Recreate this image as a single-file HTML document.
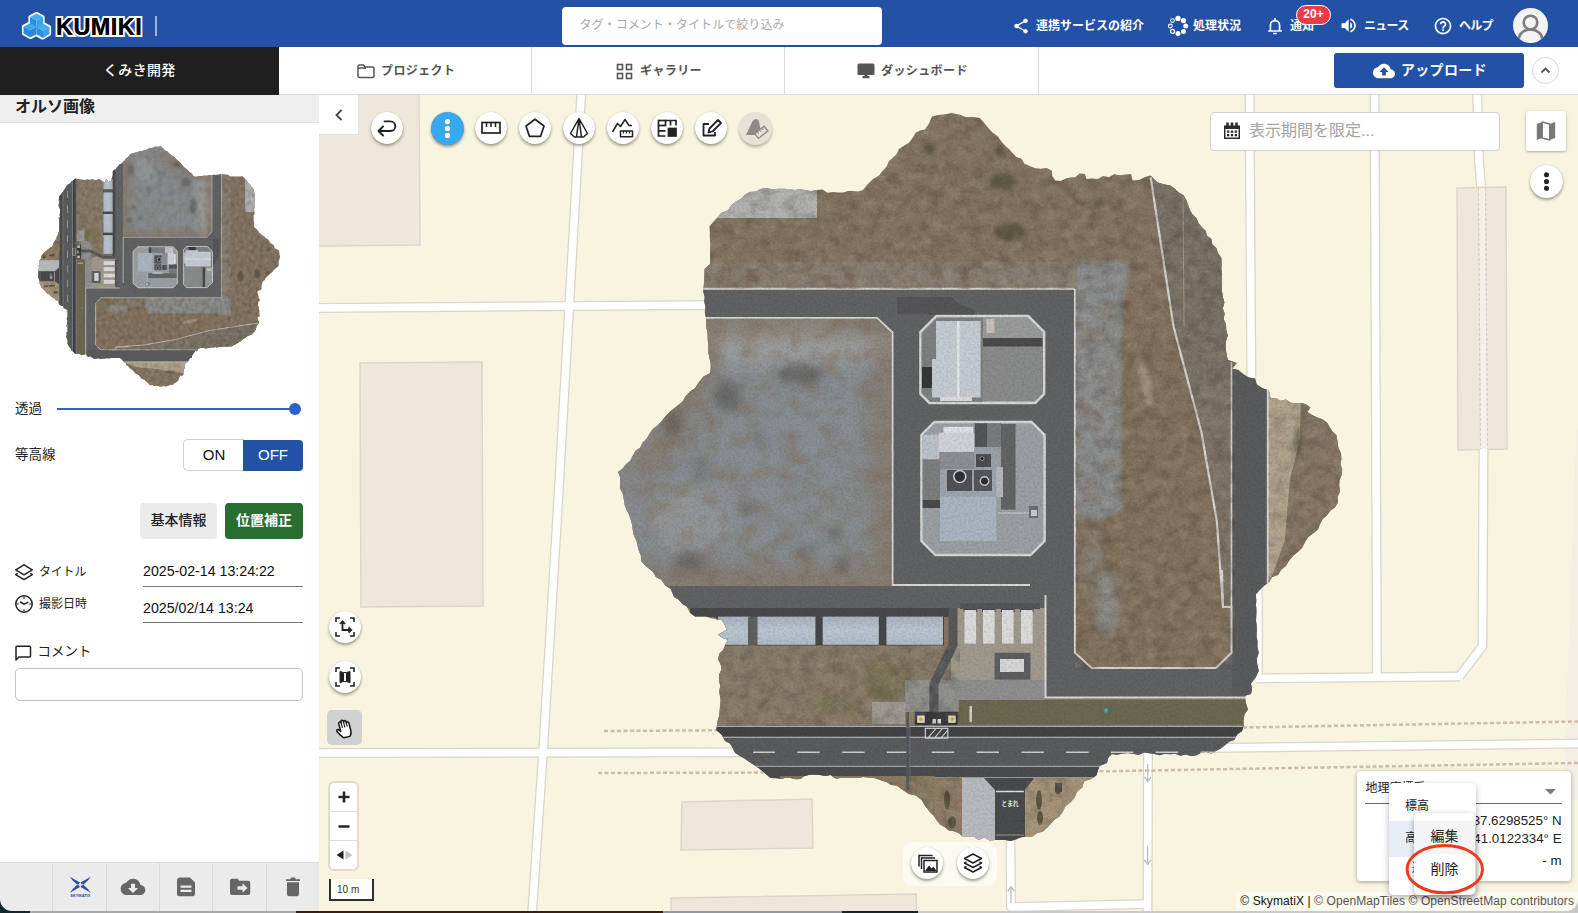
<!DOCTYPE html>
<html lang="ja">
<head>
<meta charset="utf-8">
<title>KUMIKI</title>
<style>
*{box-sizing:border-box;margin:0;padding:0}
html,body{width:1578px;height:913px;overflow:hidden;background:#fff}
body{position:relative;font-family:"Liberation Sans","Noto Sans CJK JP",sans-serif;color:#222;font-size:13px}
.abs{position:absolute}
#hdr{position:absolute;left:0;top:0;width:1578px;height:47px;background:#2351a5}
#hdr .t{position:absolute;top:17px;height:18px;line-height:18px;color:#fff;font-size:12px;font-weight:700;white-space:nowrap}
#hdr svg{position:absolute}
#search{position:absolute;left:562px;top:7px;width:320px;height:38px;background:#fff;border-radius:4px;color:#a9a9a9;font-size:12px;line-height:36px;padding-left:17.500px;white-space:nowrap;letter-spacing:.06px}
#badge{position:absolute;left:1296px;top:5px;width:35px;height:20px;border-radius:10px;background:#ee3a4b;border:1.5px solid #fff;color:#fff;font-size:12px;font-weight:700;line-height:17px;text-align:center}
#nav{position:absolute;left:0;top:47px;width:1578px;height:48px;background:#fff;border-bottom:1px solid #dcdcdc}
#proj{position:absolute;left:0;top:0;width:279px;height:47.5px;background:#1f1f1f;color:#fff;font-size:14px;font-weight:500;line-height:47px;text-align:center;letter-spacing:.3px}
.tab{position:absolute;top:0;height:47px;border-right:1px solid #dcdcdc;color:#555;font-size:12px;font-weight:700;line-height:47px;white-space:nowrap;letter-spacing:.4px}
.tab svg{position:absolute}
.tab span{position:absolute;top:1px}
#upload{position:absolute;left:1334px;top:6px;width:190px;height:35px;background:#2351a5;border-radius:3px;color:#fff;font-size:14px;font-weight:700;line-height:34px;white-space:nowrap;letter-spacing:.3px}
#chev{position:absolute;left:1532px;top:10px;width:27px;height:27px;border-radius:50%;border:1px solid #d5d5d5;background:#fff}
#left{position:absolute;left:0;top:95px;width:319px;height:818px;background:#fff}
#map{position:absolute;left:319px;top:95px;width:1259px;height:818px;background:#f8f4df;overflow:hidden}
</style>
</head>
<body>
<div id="hdr">
  <svg style="left:21px;top:10px" width="32" height="32" viewBox="0 0 32 32">
    <g stroke="#fff" stroke-width="3.2" stroke-linejoin="round" fill="#fff">
      <path d="M15.5 3.5 L22 7 L22 13.5 L28.5 17 L28.5 24 L21.5 28 L15 24.5 L9.5 27.5 L2.5 23.5 L2.5 16.5 L9 13 L9 7 Z"/>
    </g>
    <path d="M15.5 3.5 L22 7 L15.5 10.5 L9 7 Z" fill="#44aef0"/>
    <path d="M9 7 L15.5 10.5 L15.5 18 L9 14.5 Z" fill="#2b8fe0"/>
    <path d="M22 7 L15.5 10.5 L15.5 18 L22 14.5 Z" fill="#3aa0ea"/>
    <path d="M9 13.2 L15.5 16.8 L9 20.3 L2.5 16.6 Z" fill="#3fa8ee"/>
    <path d="M2.5 16.6 L9 20.3 L9 27.5 L2.5 23.6 Z" fill="#2a8ada"/>
    <path d="M15.5 16.8 L9 20.3 L9 27.5 L15.5 24.3 Z" fill="#2f86cf"/>
    <path d="M22 13.6 L28.5 17.1 L22 20.8 L15.5 17.2 Z" fill="#44aef0"/>
    <path d="M15.5 17.2 L22 20.8 L22 28 L15.5 24.3 Z" fill="#2b8fe0"/>
    <path d="M28.5 17.1 L22 20.8 L22 28 L28.5 24.1 Z" fill="#39a0ea"/>
  </svg>
  <div class="abs" style="left:56px;top:14px;height:26px;line-height:26px;font-size:23.5px;font-weight:700;color:#000;letter-spacing:.45px;-webkit-text-stroke:4px #fff;paint-order:stroke fill;white-space:nowrap">KUMIKI</div>
  <div class="abs" style="left:56px;top:14px;height:26px;line-height:26px;font-size:23.5px;font-weight:700;color:#000;letter-spacing:.45px;white-space:nowrap">KUMIKI</div>
  <div class="abs" style="left:155px;top:16px;width:1.5px;height:20px;background:#9fb3da"></div>
  <div id="search">タグ・コメント・タイトルで絞り込み</div>
  <!-- share -->
  <svg style="left:1012px;top:17px" width="18" height="18" viewBox="0 0 24 24" fill="#fff"><path d="M18 16.08c-.76 0-1.44.3-1.96.77L8.91 12.7c.05-.23.09-.46.09-.7s-.04-.47-.09-.7l7.05-4.11c.54.5 1.25.81 2.04.81 1.66 0 3-1.34 3-3s-1.340-3-3-3-3 1.340-3 3c0 .24.04.47.09.7L8.040 9.810C7.500 9.310 6.790 9 6 9c-1.660 0-3 1.340-3 3s1.340 3 3 3c.79 0 1.500-.31 2.040-.81l7.120 4.160c-.05.21-.08.43-.08.650 0 1.610 1.310 2.920 2.920 2.920s2.920-1.310 2.920-2.920-1.310-2.920-2.920-2.920z"/></svg>
  <div class="t" style="left:1036px">連携サービスの紹介</div>
  <!-- spinner -->
  <svg style="left:1167px;top:15px" width="22" height="22" viewBox="0 0 22 22" fill="#fff" stroke="#fff">
    <circle cx="11" cy="3.400" r="2.700" stroke="none"/><circle cx="16.500" cy="5.600" r="2.600" stroke="none"/><circle cx="18.700" cy="11" r="2.500" stroke="none"/><circle cx="16.500" cy="16.400" r="2.500" stroke="none"/><circle cx="11" cy="18.600" r="2.500" stroke="none"/>
    <circle cx="5.500" cy="16.400" r="2" fill="#2351a5" stroke-width="1.200"/><circle cx="3.300" cy="11" r="1.900" fill="#2351a5" stroke-width="1.100"/><circle cx="5.500" cy="5.600" r="1.900" fill="#2351a5" stroke-width="1.100"/>
  </svg>
  <div class="t" style="left:1193px">処理状況</div>
  <!-- bell -->
  <svg style="left:1265px;top:16px" width="20" height="20" viewBox="0 0 24 24" fill="none" stroke="#fff" stroke-width="2"><path d="M6.500 17.500 V11 a5.500 5.500 0 0 1 11 0 V17.500 M4.500 18 H19.500" stroke-linecap="round"/><path d="M10.500 21 h3" stroke-linecap="round"/><path d="M12 4.500 v-1.200" stroke-linecap="round"/></svg>
  <div class="t" style="left:1290px">通知</div>
  <div id="badge">20+</div>
  <!-- speaker -->
  <svg style="left:1338px;top:16px" width="19" height="19" viewBox="0 0 24 24" fill="#fff"><path d="M3 9v6h4l5 5V4L7 9H3zm13.500 3c0-1.770-1.020-3.290-2.500-4.030v8.050c1.480-.73 2.500-2.250 2.500-4.020zM14 3.230v2.060c2.890.86 5 3.540 5 6.710s-2.110 5.850-5 6.710v2.060c4.010-.91 7-4.490 7-8.770s-2.990-7.860-7-8.770z" transform="translate(1.500 0)"/></svg>
  <div class="t" style="left:1364px;letter-spacing:-.7px">ニュース</div>
  <!-- help -->
  <svg style="left:1432.500px;top:15.500px" width="20" height="20" viewBox="0 0 24 24" fill="#fff"><path d="M11 18h2v-2h-2v2zm1-16C6.480 2 2 6.480 2 12s4.480 10 10 10 10-4.480 10-10S17.520 2 12 2zm0 18c-4.410 0-8-3.590-8-8s3.590-8 8-8 8 3.590 8 8-3.590 8-8 8zm0-14c-2.210 0-4 1.790-4 4h2c0-1.100.9-2 2-2s2 .9 2 2c0 2-3 1.750-3 5h2c0-2.250 3-2.500 3-5 0-2.210-1.790-4-4-4z"/></svg>
  <div class="t" style="left:1459px;letter-spacing:-.7px">ヘルプ</div>
  <!-- avatar -->
  <svg style="left:1513px;top:8px" width="35" height="35" viewBox="0 0 35 35"><defs><clipPath id="avc"><circle cx="17.500" cy="17.500" r="17.500"/></clipPath></defs><circle cx="17.500" cy="17.500" r="17.500" fill="#f3f3f3"/><g clip-path="url(#avc)" fill="none" stroke="#7d7d7d" stroke-width="2.600"><circle cx="17.500" cy="14.500" r="6.800"/><path d="M5.500 36 v-4 a12 10.500 0 0 1 24 0 v4"/></g></svg>
</div>

<div id="nav">
  <div id="proj">くみき開発</div>
  <div class="tab" style="left:279px;width:253px">
    <svg style="left:78px;top:16px" width="18" height="16" viewBox="0 0 18 16" fill="none" stroke="#555" stroke-width="1.500"><path d="M1 3.500 a1.500 1.500 0 0 1 1.500-1.500 H6.500 l1.500 2 H15.500 a1.500 1.500 0 0 1 1.500 1.500 V13 a1.500 1.500 0 0 1-1.500 1.500 H2.500 a1.500 1.500 0 0 1-1.500-1.500 Z M1 5 H9"/></svg>
    <span style="left:102px">プロジェクト</span>
  </div>
  <div class="tab" style="left:532px;width:253px">
    <svg style="left:84px;top:15.500px" width="17" height="17" viewBox="0 0 17 17" fill="none" stroke="#555" stroke-width="1.600"><rect x="1.500" y="1.500" width="5" height="5"/><rect x="10.500" y="1.500" width="5" height="5"/><rect x="1.500" y="10.500" width="5" height="5"/><rect x="10.500" y="10.500" width="5" height="5"/></svg>
    <span style="left:108px">ギャラリー</span>
  </div>
  <div class="tab" style="left:785px;width:254px">
    <svg style="left:72px;top:16px" width="18" height="16" viewBox="0 0 18 16" fill="#555"><rect x="0.500" y="0.500" width="17" height="11.500" rx="1.500"/><rect x="5.500" y="13" width="7" height="2.200"/><rect x="7.500" y="11" width="3" height="3"/></svg>
    <span style="left:96px">ダッシュボード</span>
  </div>
  <div id="upload">
    <svg class="abs" style="left:39px;top:7px" width="22" height="22" viewBox="0 0 24 24" fill="#fff"><path d="M19.350 10.040C18.670 6.590 15.640 4 12 4 9.110 4 6.600 5.640 5.350 8.040 2.340 8.360 0 10.910 0 14c0 3.310 2.690 6 6 6h13c2.760 0 5-2.240 5-5 0-2.640-2.050-4.780-4.650-4.960zM14 13v4h-4v-4H7l5-5 5 5h-3z"/></svg>
    <span class="abs" style="left:67px;top:0">アップロード</span>
  </div>
  <div id="chev"><svg class="abs" style="left:6px;top:6px" width="13" height="13" viewBox="0 0 13 13" fill="none" stroke="#555" stroke-width="1.800"><path d="M2.500 8.500 L6.500 4.500 L10.500 8.500"/></svg></div>
</div>

<div id="left">
  <div class="abs" style="left:0;top:0;width:319px;height:28px;background:#efefef;border-bottom:1px solid #dedede"></div>
  <div class="abs" style="left:15px;top:0px;height:24px;line-height:24px;font-size:16px;font-weight:700;color:#222;white-space:nowrap">オルソ画像</div>
  <svg class="abs" id="thumb" style="left:0;top:28px" width="319" height="280" viewBox="0 0 319 280"><use href="#ortho" transform="translate(317.550 -182.400) scale(0.3323) rotate(90)"/></svg>
  <div class="abs" style="left:15px;top:304px;height:20px;line-height:20px;font-size:13.5px;color:#222">透過</div>
  <div class="abs" style="left:57px;top:313px;width:238px;height:2px;background:#2a62c9"></div>
  <div class="abs" style="left:289px;top:308px;width:12px;height:12px;border-radius:50%;background:#2a62c9"></div>
  <div class="abs" style="left:15px;top:350px;height:20px;line-height:20px;font-size:13.500px;color:#222">等高線</div>
  <div class="abs" style="left:183px;top:344px;width:61px;height:32px;border:1px solid #cfcfcf;border-right:none;border-radius:5px 0 0 5px;background:#fff;text-align:center;line-height:30px;font-size:15px;color:#111">ON</div>
  <div class="abs" style="left:243px;top:344.500px;width:60px;height:31px;border-radius:0 4px 4px 0;background:#2351a5;text-align:center;line-height:30px;font-size:15px;color:#fff">OFF</div>
  <div class="abs" style="left:140px;top:408px;width:77px;height:36px;border-radius:4px;background:#ebebeb;text-align:center;line-height:35px;font-size:14px;font-weight:500;color:#222">基本情報</div>
  <div class="abs" style="left:225px;top:408px;width:78px;height:36px;border-radius:4px;background:#2a6d31;text-align:center;line-height:35px;font-size:14px;font-weight:700;color:#fff">位置補正</div>
  <svg class="abs" style="left:14px;top:467.500px" width="20" height="20" viewBox="0 0 20 20" fill="none" stroke="#222" stroke-width="1.500" stroke-linejoin="round"><path d="M10 1.800 L18.300 6.800 L10 11.800 L1.700 6.800 Z"/><path d="M3.700 10.400 L1.700 11.700 L10 16.700 L18.300 11.700 L16.300 10.400"/></svg>
  <div class="abs" style="left:39px;top:467px;height:20px;line-height:20px;font-size:12px;color:#222;letter-spacing:-.2px">タイトル</div>
  <div class="abs" style="left:143px;top:466px;height:20px;line-height:20px;font-size:14.200px;color:#111;white-space:nowrap">2025-02-14 13:24:22</div>
  <div class="abs" style="left:143px;top:491px;width:160px;height:1px;background:#777"></div>
  <svg class="abs" style="left:14px;top:499px" width="20" height="20" viewBox="0 0 20 20" fill="none" stroke="#222" stroke-width="1.500" stroke-linecap="round"><circle cx="10" cy="10" r="8.200"/><path d="M6.500 8 L10 10.200 L13.800 8.300"/><path d="M10 3.200v1.200M10 15.600v1.200M3.200 10h1.200M15.600 10h1.200" stroke-width="1.200"/></svg>
  <div class="abs" style="left:39px;top:498.500px;height:20px;line-height:20px;font-size:12px;color:#222">撮影日時</div>
  <div class="abs" style="left:143px;top:503px;height:20px;line-height:20px;font-size:14.200px;color:#111;white-space:nowrap">2025/02/14 13:24</div>
  <div class="abs" style="left:143px;top:527px;width:160px;height:1px;background:#777"></div>
  <svg class="abs" style="left:14px;top:549px" width="18" height="18" viewBox="0 0 18 18" fill="none" stroke="#222" stroke-width="1.500" stroke-linejoin="round"><path d="M2 3.300 a1 1 0 0 1 1-1 H15.500 a1 1 0 0 1 1 1 V12 a1 1 0 0 1-1 1 H5 L2 16 Z"/></svg>
  <div class="abs" style="left:37.500px;top:547px;height:20px;line-height:20px;font-size:13.500px;color:#222">コメント</div>
  <div class="abs" style="left:15px;top:573px;width:288px;height:33px;border:1px solid #c4c4c4;border-radius:5px;background:#fff"></div>
  <!-- bottom toolbar -->
  <div class="abs" style="left:0;top:767px;width:319px;height:51px;background:#ebebeb;border-top:1px solid #dcdcdc"></div>
  <div class="abs" style="left:52px;top:768px;width:1px;height:50px;background:#dadada"></div>
  <div class="abs" style="left:106px;top:768px;width:1px;height:50px;background:#dadada"></div>
  <div class="abs" style="left:159px;top:768px;width:1px;height:50px;background:#dadada"></div>
  <div class="abs" style="left:212px;top:768px;width:1px;height:50px;background:#dadada"></div>
  <div class="abs" style="left:266px;top:768px;width:1px;height:50px;background:#dadada"></div>
  <svg class="abs" style="left:0;top:768px" width="319" height="50" viewBox="0 863 319 50">
  <g fill="#2a4fa3"><path d="M69.800 876.800 L80 882.600 L78 885.400 L72.500 880.300 Z M69.800 892.700 L80 886.900 L78 884.100 L72.500 889.200 Z M90.800 876.800 L80.600 882.600 L82.600 885.400 L88.100 880.300 Z M90.800 892.700 L80.600 886.900 L82.600 884.100 L88.100 889.200 Z"/></g>
  <text x="80.300" y="897.300" font-size="3.600" font-weight="700" fill="#2a4fa3" text-anchor="middle" textLength="20" lengthAdjust="spacingAndGlyphs" font-family="'Liberation Sans',sans-serif">SKYMATIX</text>
  <g fill="#666">
    <path transform="translate(120.700 874.600) scale(1.025)" d="M19.350 10.040C18.670 6.590 15.640 4 12 4 9.110 4 6.600 5.640 5.350 8.040 2.340 8.360 0 10.910 0 14c0 3.310 2.690 6 6 6h13c2.760 0 5-2.240 5-5 0-2.640-2.050-4.780-4.650-4.960zM17 13l-5 5-5-5h3V9h4v4h3z"/>
    <path d="M180 877.600 H190 L195 882.600 V893.800 A2.500 2.500 0 0 1 192.500 896.300 H179.500 A2.500 2.500 0 0 1 177 893.800 V880.600 A3 3 0 0 1 180 877.600 Z M180.500 885.500 V887.800 H191.500 V885.500 Z M180.500 889.800 V892.100 H191.500 V889.800 Z" fill-rule="evenodd"/>
    <path d="M232 878.800 H237.500 L239.500 880.800 H248.200 A2 2 0 0 1 250.200 882.800 V893 A2 2 0 0 1 248.200 895 H232 A2 2 0 0 1 230 893 V880.800 A2 2 0 0 1 232 878.800 Z M237.500 886.300 V889.700 H242.500 V892.800 L247.500 888 L242.500 883.200 V886.300 Z" fill-rule="evenodd"/>
    <path d="M286 879.200 H290.300 L291 877.600 H295 L295.700 879.200 H300 V881 H286 Z M287 882.200 H299 V894.300 A2 2 0 0 1 297 896.300 H289 A2 2 0 0 1 287 894.300 Z"/>
  </g>
</svg>

</div>

<div id="map">
  <svg class="abs" style="left:0;top:0" width="1259" height="818" viewBox="319 95 1259 818">
    <defs><!--DEFS--><clipPath id="oc"><path d="M932 116.4 L938.5 115.1 L945.2 114.3 L951.7 113 L960 114.8 L966.3 117.2 L973.1 117 L979.7 118 L984.1 123 L988.3 128.1 L992.9 132.9 L997.7 136.3 L1001.1 141.1 L1004.9 145.5 L1009.3 149.3 L1012.6 153.3 L1016.3 156.9 L1021.5 158.7 L1024.2 163.4 L1029 165.7 L1034.5 167.9 L1040.4 168.8 L1046.6 168 L1052 170.7 L1052.2 176.1 L1055.3 180.5 L1060.6 180.9 L1065.3 178.8 L1070.2 177.6 L1075.3 177.2 L1079.6 173.6 L1084.9 174 L1086.5 178.9 L1092.1 178.4 L1097.8 179.1 L1103.1 176.1 L1108.8 177.3 L1114.1 174.3 L1119.9 175.3 L1125.4 174.4 L1131 174 L1132.6 180.5 L1138.9 179.9 L1144.6 177.3 L1150.6 175.6 L1157.2 182.2 L1163.7 184.3 L1170.4 185.5 L1174.8 188.8 L1178.8 192.4 L1183.5 195.3 L1186.2 199.8 L1188.1 204.9 L1190 209.9 L1192.6 214.5 L1196.6 218.3 L1198.5 223.1 L1201.7 227.1 L1205.6 230.7 L1207.2 235.7 L1211.3 239.1 L1212.4 244.4 L1216.4 247.9 L1218.1 253.2 L1221.3 257.8 L1221.7 263.4 L1221.3 269.1 L1222.1 274.7 L1221.6 280.3 L1222 286 L1222 291.6 L1222.9 297.2 L1224.4 302.6 L1222.7 308.3 L1224.6 313.6 L1223.6 319.2 L1226 324.5 L1226.2 330 L1227.7 335.2 L1226.1 340.6 L1225.7 345.9 L1226 351.1 L1226.9 356.4 L1228 360 L1236.7 363 L1232 369 L1238.2 370.1 L1243.3 374.2 L1248.7 377.4 L1255 378.4 L1256.7 384.5 L1262.5 388.3 L1269 390.6 L1270.5 398.3 L1275.8 397.9 L1280.5 400.7 L1285.9 399.4 L1290.6 402.8 L1295.8 403.2 L1301 403 L1306.1 404.3 L1310.4 407.5 L1307.3 412 L1312.2 414.9 L1317.2 417.5 L1322.7 419.2 L1327.2 422.8 L1329.7 427.3 L1332.4 431.6 L1336.4 435 L1337.5 441.3 L1338.3 447.6 L1341 453.5 L1341.4 458.9 L1340.4 464.3 L1342.2 469.6 L1341.6 475 L1339.4 480.3 L1339.2 485.9 L1340.1 491.6 L1337.5 496.9 L1338 502.6 L1335.1 507.3 L1330.5 510.6 L1327.2 515 L1322.8 518.9 L1319.9 523.9 L1317.9 529.5 L1313.4 533.3 L1308.3 536.9 L1305 541.9 L1302.4 547.6 L1298 551.7 L1293.2 555.7 L1289.2 560.5 L1285.9 565.9 L1281.2 570 L1278.1 575.1 L1272.1 577.3 L1269 582.4 L1264.3 585.5 L1259.9 589.8 L1255.8 594.5 L1256.3 599.7 L1256 604.9 L1256.4 610.1 L1256.3 615.3 L1256 620.6 L1256.7 625.8 L1256.8 631 L1256.5 636.2 L1257.6 641.4 L1257.3 646.6 L1258.8 652.6 L1256.7 658.9 L1257.4 665 L1258.8 671 L1255.6 677.6 L1251 683.4 L1252 688.7 L1251 694 L1245 695.7 L1245.8 702.8 L1248 709.5 L1244.5 714.2 L1243.5 720 L1243.7 725.6 L1242 731 L1237.1 734.6 L1234.3 740 L1229.1 741.7 L1225 745.2 L1220.7 748.5 L1216 751 L1211.3 753.4 L1205.7 751.8 L1200.7 752.9 L1196 755.5 L1190.8 756.1 L1185.7 754.5 L1180.4 755.7 L1175.3 753.7 L1170.1 754.3 L1165 753.7 L1159.7 755.2 L1154.6 754 L1149.2 753.3 L1143.9 752.6 L1138.5 754.9 L1133.2 753.8 L1127.8 752.9 L1122.4 753.6 L1117.1 754.7 L1111.7 754 L1108.2 757.9 L1107 763 L1099.4 766 L1096.3 775.4 L1090.6 779.3 L1084 781.5 L1082.3 787.4 L1077.3 791.4 L1074.9 796.9 L1070.9 802 L1065.6 806.1 L1062.6 812 L1059.5 816.6 L1054.7 819.5 L1051 823.5 L1047.3 827.5 L1042.8 831.6 L1036.9 833.3 L1032 836.7 L1026.4 836.5 L1020.9 837.3 L1015.8 839.4 L1010.5 841 L1005.4 840.1 L1000.2 840.1 L995 840 L989.5 840.6 L984.5 837.4 L978.8 839.9 L973.8 836.5 L968.4 836.6 L963 836.7 L958.9 833.3 L954.3 831.2 L949 830.6 L944.7 827.1 L940 824.4 L936.6 820.3 L933.9 815.7 L930 812 L925.4 806.3 L921.7 800 L916 795.6 L909 794 L901.5 789 L896.5 785.4 L891 785 L886.5 781.9 L881.4 780.4 L873.8 777.8 L868.4 777.2 L863 776.9 L857.6 777.6 L852.2 777.8 L846.8 777.7 L841.4 777.5 L836 779 L831 775 L825.4 775.8 L819.8 775 L814.1 774.6 L808.5 775 L803 776.5 L800.8 779 L795.8 779.3 L790.7 778.1 L785.6 777.8 L780.6 779 L775.6 778.3 L770.5 778 L763 771.5 L758.6 768.1 L754 765 L749.3 762 L744.8 758.8 L740 756 L735.3 753.2 L732.8 748.2 L729.9 743.6 L725 741 L721.7 734.8 L716.4 730 L717.6 721 L719.1 716.1 L719.6 711.1 L720 706 L720.6 701 L719.9 696 L719.2 691 L720.3 686 L719 681 L719 674.7 L721.6 669 L720.5 663.9 L718 659.4 L719.2 653.8 L723.3 649.7 L725.4 644.6 L728 639.7 L722.6 638 L718 634.7 L726.5 629.8 L724.6 624.6 L721.6 620 L716.3 619.3 L711 618.3 L705.8 616.6 L700.4 616.5 L695 616.6 L689.8 612.7 L687 606.8 L682.3 604 L678.7 599.8 L674 597 L670.7 588.7 L665.2 585.5 L661.5 580.1 L655.9 577 L653.1 572.1 L648.8 568.6 L644.6 565 L641 560.8 L640.9 555.5 L638.8 550.7 L637.5 545.8 L636.5 540.7 L634 536 L632.9 531 L632.2 525.5 L630.9 520.2 L629.1 515 L626.7 510.1 L624.7 505 L623.8 499.4 L623 493.9 L620.2 488.7 L620.2 483 L620.2 477.3 L618 472 L622.6 468.7 L626 464.3 L630.2 460.7 L632.9 455.6 L635.6 450.8 L640.3 447.6 L642.6 442.5 L646.6 438.8 L649.3 434 L652.7 428.9 L657.7 425.2 L661.9 420.8 L665.7 416 L669.6 412.1 L674 408.6 L678.3 405 L682.6 401.4 L685.5 396.4 L689.8 391.7 L695.2 388.1 L698.6 382.6 L703.3 376.7 L710 373 L710.8 367.9 L710.7 362.9 L709.5 358 L708.5 353 L708.2 347.9 L708 342.7 L707.7 337.5 L707.6 332.4 L706.1 327.3 L706.2 322.1 L705.8 317 L704.8 312 L705.5 307 L704.3 302 L704.7 297 L703.3 292 L703.5 287 L704.2 281 L704.3 275 L704.5 269 L710 264 L710.1 258.6 L710 253.3 L710.1 247.9 L710.2 242.6 L709.8 237.2 L709.9 231.9 L709.4 226.5 L713 222.2 L716.7 218 L721 212.9 L727.6 210.5 L731.5 205 L735.8 201.6 L740.6 198.9 L744.6 195 L749.7 191.9 L755.8 191.5 L761 188.7 L766.8 188.2 L772.5 189.3 L778.2 188.8 L784 188.7 L789.5 189.3 L795 190 L800.5 189 L806 190.5 L811.4 191.1 L817 190 L822.5 189.4 L827.5 192.7 L833 192 L838 192.4 L843.1 192.5 L848 190.9 L853 191.1 L858.1 191.6 L863 190 L867.7 184.2 L873 179 L879 175.6 L882.5 170.9 L886.7 166.6 L889 161 L893.1 157.6 L896.8 153.9 L899 149 L903.9 145.8 L909 142.7 L912.7 138.1 L915.5 133 L919.9 130.4 L925 129.6 L929.1 123.3 Z" /></clipPath>
<filter id="nzd" x="0" y="0" width="100%" height="100%" color-interpolation-filters="sRGB"><feTurbulence type="fractalNoise" baseFrequency="0.07 0.08" numOctaves="4" seed="7"/><feColorMatrix type="matrix" values="0 0 0 0 0.23  0 0 0 0 0.19  0 0 0 0 0.16  1.7 0 0 0 -0.72"/></filter>
<filter id="nzl" x="0" y="0" width="100%" height="100%" color-interpolation-filters="sRGB"><feTurbulence type="fractalNoise" baseFrequency="0.09 0.1" numOctaves="3" seed="23"/><feColorMatrix type="matrix" values="0 0 0 0 0.72  0 0 0 0 0.68  0 0 0 0 0.62  0 1.6 0 0 -0.7"/></filter>
<filter id="nzb" x="0" y="0" width="100%" height="100%" color-interpolation-filters="sRGB"><feTurbulence type="fractalNoise" baseFrequency="0.05 0.06" numOctaves="4" seed="41"/><feColorMatrix type="matrix" values="0 0 0 0 0.50  0 0 0 0 0.40  0 0 0 0 0.31  0 0 1.8 0 -0.78"/></filter>
<filter id="nzf" x="0" y="0" width="100%" height="100%" color-interpolation-filters="sRGB"><feTurbulence type="fractalNoise" baseFrequency="0.45" numOctaves="2" seed="5"/><feColorMatrix type="matrix" values="0 0 0 0 0  0 0 0 0 0  0 0 0 0 0  0.9 0 0 0 -0.32"/></filter>
<linearGradient id="roofg" x1="0" y1="0" x2="0" y2="1"><stop offset="0" stop-color="#a9b4c0"/><stop offset="0.500" stop-color="#bcc6d1"/><stop offset="1" stop-color="#b0bbc7"/></linearGradient>
<filter id="bl9" x="-20%" y="-20%" width="140%" height="140%"><feGaussianBlur stdDeviation="9"/></filter><filter id="bl5" x="-50%" y="-50%" width="200%" height="200%"><feGaussianBlur stdDeviation="4"/></filter><filter id="bl3" x="-50%" y="-50%" width="200%" height="200%"><feGaussianBlur stdDeviation="2"/></filter>
<clipPath id="gravc"><path d="M600 318.500 H877 L891.500 333 V585.500 H600 Z M1075 300 H1128 V650 H1075 Z M1070 262 H700 V289 H1075 V300 H1120 L1135 262 Z"/></clipPath>
<clipPath id="grassc"><path d="M690 100 H1240 V289 H690 Z M1075 289 H1235 V670 H1075 Z M1268 385 H1350 V600 H1268 Z M700 645 H960 V726 H700 Z M1026 778 H1110 V850 H1026 Z M780 776 H961 V850 H780 Z"/></clipPath>
<clipPath id="c1c"><path d="M937.6 317.2 L1027 317.2 L1043 333.2 L1043 392.8 L1034 401.8 L930.6 401.8 L921.6 392.8 L921.6 333.2 Z" /></clipPath>
<clipPath id="c2c"><path d="M935.6 423.2 L1030.4 423.2 L1043.4 436.2 L1043.4 539.8 L1029.4 553.8 L936.6 553.8 L922.6 539.8 L922.6 436.2 Z" /></clipPath><!--/DEFS--></defs>
    <!-- landuse/buildings -->
    <g fill="#efe7dc" stroke="#dfd6cb" stroke-width="1.500">
      <path d="M315 90 H419 L420 245 L315 246 Z"/>
      <path d="M360 363 L482 362 L483 606 L361 607 Z"/>
      <path d="M682 802 L812 799 L813 848 L681 850 Z"/>
      <path d="M671 898 L916 894 L917 920 L671 920 Z"/>
      <path d="M1457 188 L1506 187 L1507 449 L1458 450 Z"/>
      <path d="M1576.500 430 L1590 430 L1590 800 L1563 800 Z" stroke="none" fill="#f4eee5"/>
    </g>
    <!-- road casings -->
    <g fill="none" stroke="#d9d5c9" stroke-width="10" stroke-linejoin="round">
      <path d="M581.500 90 L558.500 495 L543 753 L532 915"/>
      <path d="M315 308 L720 305"/>
      <path d="M315 753 L900 752 L1578 743.500"/>
      <path d="M1249.500 90 L1251.500 400 L1258 600 L1258 678"/>
      <path d="M1374.500 90 L1377 677"/>
      <path d="M1477 90 L1479 160 L1481 186"/>
      <path d="M1483.500 449 L1482.500 646 L1459.500 676.500"/>
      <path d="M1256 678.500 L1460 676.500"/>
      <path d="M1148 750 L1147.500 915"/>
      <path d="M1010.500 835 L1011 907 L1148 904"/>
    </g>
    <g fill="none" stroke="#fff" stroke-width="7.500" stroke-linejoin="round">
      <path d="M581.500 90 L558.500 495 L543 753 L532 915"/>
      <path d="M315 308 L720 305"/>
      <path d="M315 753 L900 752 L1578 743.500"/>
      <path d="M1249.500 90 L1251.500 400 L1258 600 L1258 678"/>
      <path d="M1374.500 90 L1377 677"/>
      <path d="M1477 90 L1479 160 L1481 186"/>
      <path d="M1483.500 449 L1482.500 646 L1459.500 676.500"/>
      <path d="M1256 678.500 L1460 676.500"/>
      <path d="M1148 750 L1147.500 915"/>
      <path d="M1010.500 835 L1011 907 L1148 904"/>
    </g>
    <!-- tunnel -->
    <g fill="none" stroke="#d8d0c6" stroke-width="1" stroke-dasharray="3 2"><path d="M1478.500 188 L1480.500 449"/><path d="M1485.500 188 L1487.500 449"/></g>
    <path d="M1482 188 L1484 449" stroke="#f6f1e8" stroke-width="6" fill="none"/>
    <g fill="none" stroke="#d8d0c6" stroke-width="1" stroke-dasharray="3 2"><path d="M1478.500 188 L1480.500 449"/><path d="M1485.500 188 L1487.500 449"/></g>
    <!-- dashed rails -->
    <g fill="none" stroke="#cdbba8" stroke-width="2.500" stroke-dasharray="4 2.500">
      <path d="M604 731 L760 730"/>
      <path d="M598 773 L800 772.500"/>
      <path d="M1230 727.700 L1578 721.500"/>
      <path d="M1080 771.700 L1578 763"/>
    </g>
    <!-- oneway arrows -->
    <g fill="none" stroke="#bdbdbd" stroke-width="1.300">
      <path d="M1147.800 764 V781 M1144.500 777 L1147.800 781.500 L1151 777"/>
      <path d="M1147.600 846 V864 M1144.300 860 L1147.600 864.500 L1150.800 860"/>
      <path d="M1011 903 V887 M1007.800 891 L1011 886.500 L1014.200 891"/>
    </g>
    <!--ORTHO--><g id="ortho" clip-path="url(#oc)">
<rect x="600" y="100" width="760" height="750" fill="#857563"/>
<path d="M700 262 L1075 262 L1075 289 L700 289 Z" fill="#8b857b" opacity="0.7"/>
<rect x="1075" y="289" width="160" height="381" fill="#85745f"/>
<path d="M1075 262 L1130 262 L1122 320 L1122 510 L1100 520 L1075 520 Z" fill="#8f969a" opacity="0.85" filter="url(#bl3)"/>
<ellipse cx="1108" cy="605" rx="13" ry="34" fill="#8f969a" opacity="0.7" filter="url(#bl5)"/>
<ellipse cx="1092" cy="560" rx="12" ry="30" fill="#8f969a" opacity="0.45" filter="url(#bl5)"/>
<ellipse cx="1146" cy="385" rx="5" ry="22" fill="#b3a596" opacity="0.7" filter="url(#bl3)" transform="rotate(-12 1146 385)"/>
<path d="M1150.6 172 L1240 172 L1240 372 L1195 400 L1173.6 326.8 Z" fill="#7b7366"/>
<path d="M1195 400 L1232 372 L1232 607 L1223 607 L1216.8 521 L1201.4 432 Z" fill="#80766a"/>
<path d="M716.7 218 L817 218 L817 186 L761 186 L744.6 193 L731.5 203 L712 222 Z" fill="#b4b5b3"/>
<path d="M1267 385 L1301 400 L1300 440 L1290 480 L1285 540 L1267 590 Z" fill="#b3a78f"/>
<path d="M1301 400 L1350 410 L1350 540 L1285 590 L1285 540 L1290 480 L1300 440 Z" fill="#887766"/>
<path d="M600 318.5 L877 318.5 L891.5 333 L891.5 585.5 L600 585.5 Z" fill="#888e91"/>
<rect x="700" y="645" width="260" height="81" fill="#8a7c6a"/>
<ellipse cx="885" cy="680" rx="22" ry="22" fill="#74714d" opacity="0.6" filter="url(#bl5)"/>
<ellipse cx="835" cy="705" rx="30" ry="10" fill="#74714d" opacity="0.45" filter="url(#bl5)"/>
<path d="M905 680 L1045 680 L1045 700 L960 700 L960 712 L905 712 Z" fill="#929290"/>
<rect x="951" y="586" width="94" height="114" fill="#a09a8e"/>
<rect x="951" y="680" width="94" height="20" fill="#909090"/>
<rect x="891.5" y="289" width="182" height="297" fill="#626364"/>
<path d="M875 317 L893 317 L893 335 Z" fill="#626364"/>
<rect x="690" y="289" width="383.5" height="28.5" fill="#626364"/>
<rect x="1045" y="289" width="28.5" height="408" fill="#626364"/>
<rect x="891.5" y="317" width="28.5" height="269" fill="#626364"/>
<rect x="891.5" y="403" width="153.5" height="18.5" fill="#626364"/>
<rect x="891.5" y="555" width="153.5" height="29" fill="#626364"/>
<rect x="660" y="586" width="385" height="22" fill="#626364"/>
<rect x="690" y="608" width="261" height="9" fill="#48494b"/>
<rect x="716" y="616" width="228" height="29.5" fill="#47484a"/>
<path d="M1045 652 L1076.4 652.8 L1091.7 668 L1216 668 L1232 652 L1232 369 L1267.5 369 L1267.5 697 L1045 697 Z" fill="#626364"/>
<rect x="1232" y="369" width="35.5" height="328" fill="#4d4d4f" opacity="0.3"/>
<path d="M953 608 L953 645 L934 684 L934 712" fill="none" stroke="#59595a" stroke-width="9"/>
<rect x="958.5" y="700" width="291.5" height="24.5" fill="#6d6850"/>
<rect x="700" y="725" width="560" height="53" fill="#5b5c5e"/>
<rect x="700" y="725" width="560" height="11.5" fill="#424345"/>
<rect x="700" y="766.5" width="560" height="12" fill="#4b4c4e"/>
<path d="M700 726.2 L1260 726.2" fill="none" stroke="#b4b4b2" stroke-width="1.6"/>
<path d="M700 737.3 L1260 737.3" fill="none" stroke="#a9aaac" stroke-width="1.3"/>
<path d="M700 766.3 L1260 766.3" fill="none" stroke="#9fa0a2" stroke-width="1.3"/>
<path d="M780 777.8 L1110 777.8" fill="none" stroke="#9b9c9c" stroke-width="1.4"/>
<path d="M753 752.3 L1260 752.3" fill="none" stroke="#cfcfd0" stroke-width="1.6" stroke-dasharray="22.5 22.3" stroke-dashoffset="0.5"/>
<rect x="930" y="778" width="170" height="72" fill="#a8967a"/>
<rect x="900" y="778" width="62" height="72" fill="#917e68"/>
<rect x="780" y="776" width="155" height="74" fill="#8a7a62"/>
<rect x="962" y="778" width="33" height="72" fill="#b9bbbf"/>
<path d="M984 778 L1034 778 L1025 790 L1025 850 L995 850 L995 790 Z" fill="#4a4b4d"/>
<path d="M936.4 316 L1028.2 316 L1044.2 332 L1044.2 394 L1035.2 403 L929.4 403 L920.4 394 L920.4 332 Z" fill="#9aa0a3" stroke="#d8d8d4" stroke-width="2.4"/>
<path d="M934.4 422 L1031.6 422 L1044.6 435 L1044.6 541 L1030.6 555 L935.4 555 L921.4 541 L921.4 435 Z" fill="#9aa0a3" stroke="#d8d8d4" stroke-width="2.4"/>
<path d="M1075 289 L1075 652.8 L1091.7 668 L1216 668 L1231.5 652.8 L1231.5 607 L1223 607 L1222 570" fill="none" stroke="#d8d8d4" stroke-width="2"/>
<path d="M700 288.7 L1075 288.7" fill="none" stroke="#d8d8d4" stroke-width="2"/>
<path d="M700 318 L877 318 L892.5 332.5 L892.5 585 L1030 585" fill="none" stroke="#d8d8d4" stroke-width="2"/>
<path d="M1045.5 595 L1045.5 697.5 L1250 697.5" fill="none" stroke="#d8d8d4" stroke-width="2"/>
<path d="M1267.8 390 L1267.8 585" fill="none" stroke="#d8d8d4" stroke-width="2"/>
<path d="M1231.5 362 L1231.5 607" fill="none" stroke="#d8d8d4" stroke-width="1.6"/>
<path d="M1150.6 177 L1173.6 326.8 L1201.4 432 L1216.8 521 L1223 607" fill="none" stroke="#d8d8d6" stroke-width="2.2"/>
<path d="M1183 196 L1184 326" fill="none" stroke="#9a9a98" stroke-width="1"/>
<path d="M897 297 L952 297 L958 303 L975 310 L975 314.5 L897 314.5 Z" fill="#565658"/>
<g clip-path="url(#c1c)">
<path d="M921 330 L934 317.5 L983 317.5 L983 402 L929 402 L921 394 Z" fill="#7f8081"/>
<rect x="983" y="317" width="60" height="21" fill="#9a9b9b"/>
<rect x="983" y="338" width="59.5" height="8.6" fill="#4b4b4c"/>
<rect x="983" y="347" width="60" height="54" fill="#8a8b8b"/>
<rect x="922" y="367" width="10" height="21" fill="#37383a"/>
<path d="M936 321 L980.6 321 L980.6 397.5 L932 397.5 L932 359 L936 359 Z" fill="#c6ccd4"/>
<rect x="957" y="321" width="2.5" height="76.5" fill="#e3e7ec"/>
<rect x="940" y="397" width="32" height="4" fill="#d9dcdf"/>
<rect x="986.5" y="319" width="7.9" height="14" fill="#c9c0bb"/>
</g>
<g clip-path="url(#c2c)">
<rect x="1001" y="423.8" width="14.5" height="85.8" fill="#646566"/>
<rect x="974.7" y="423" width="12.8" height="24" fill="#545556"/>
<rect x="987.5" y="423" width="13.5" height="24" fill="#7b7c7d"/>
<rect x="922" y="459" width="18" height="41" fill="#7d7e7f"/>
<rect x="922" y="500" width="18" height="8" fill="#4a4b4c"/>
<rect x="943.5" y="426.8" width="29.8" height="6.2" fill="#dfe2e6"/>
<rect x="922.4" y="434.7" width="16.6" height="24.6" fill="#bcc3cb"/>
<rect x="938.8" y="432.7" width="35.5" height="19.3" fill="#d0d4da"/>
<rect x="940" y="452" width="34" height="17" fill="#8d8f92"/>
<rect x="940" y="469" width="56.4" height="27" fill="#9ea5ae"/>
<rect x="974" y="448.5" width="22.4" height="21.5" fill="#9aa1aa"/>
<rect x="976" y="454" width="15" height="13" fill="#4c4e52"/>
<rect x="947" y="470" width="25" height="21" fill="#4f5257"/>
<rect x="974" y="470" width="18" height="21" fill="#55585d"/>
<circle cx="959.8" cy="476.5" r="6" fill="#2e3034" stroke="#c9ced4" stroke-width="1.6"/>
<circle cx="984.5" cy="481" r="4.2" fill="#2e3034" stroke="#c9ced4" stroke-width="1.4"/>
<circle cx="982" cy="458.500" r="2" fill="#222" stroke="#aab" stroke-width="0.800"/>
<rect x="996.4" y="467" width="6.6" height="30" fill="#b4b9c0"/>
<rect x="940" y="496.4" width="56.4" height="44.6" fill="#a9b5c1"/>
<rect x="998" y="512" width="32" height="2" fill="#b5b8bb"/>
<rect x="1029" y="506" width="9" height="12" fill="#6d6e70"/>
<rect x="1031" y="510" width="6" height="6" fill="#c9cbcd"/>
</g>
<rect x="718" y="616.6" width="32" height="28.2" fill="url(#roofg)"/>
<rect x="757.4" y="616.6" width="58" height="28.2" fill="url(#roofg)"/>
<rect x="822.7" y="616.6" width="56.1" height="28.2" fill="url(#roofg)"/>
<rect x="886.4" y="616.6" width="56.6" height="28.2" fill="url(#roofg)"/>
<rect x="748" y="616.6" width="9" height="28.2" fill="#5e6062"/>
<rect x="963.5" y="608" width="13.6" height="4" fill="#4a4a4a"/>
<rect x="964.5" y="610" width="11.6" height="33.6" fill="#dcdcdb"/>
<rect x="982" y="608" width="13.6" height="4" fill="#4a4a4a"/>
<rect x="983" y="610" width="11.6" height="33.6" fill="#dcdcdb"/>
<rect x="1001" y="608" width="13.6" height="4" fill="#4a4a4a"/>
<rect x="1002" y="610" width="11.6" height="33.6" fill="#dcdcdb"/>
<rect x="1020" y="608" width="13.6" height="4" fill="#4a4a4a"/>
<rect x="1021" y="610" width="11.6" height="33.6" fill="#dcdcdb"/>
<rect x="960" y="603" width="80" height="6" fill="#55565a"/>
<rect x="994.6" y="652.8" width="35.8" height="26.9" fill="#5e5f61"/>
<rect x="1000" y="659" width="24" height="13" fill="#d6d7d8"/>
<rect x="914.8" y="711.7" width="43" height="13.3" fill="#38393b"/>
<rect x="917.2" y="715.5" width="7.5" height="7.3" fill="#e4e1d6"/>
<circle cx="920.95" cy="719.2" r="1.7" fill="#e9a91c"/>
<rect x="948.3" y="715.5" width="7.5" height="7.3" fill="#e4e1d6"/>
<circle cx="952.05" cy="719.2" r="1.7" fill="#e9a91c"/>
<rect x="932.5" y="719" width="3.5" height="4.5" fill="#ddd"/>
<rect x="937.5" y="719" width="3.5" height="4.5" fill="#ddd"/>
<g stroke="#dedede" stroke-width="1.100" fill="none"><rect x="925.300" y="728.300" width="22.500" height="9.800"/><path d="M928 738 L936 728.500 M934.500 738 L942.500 728.500 M941 738 L947.800 730"/></g>
<path d="M907.6 712 L907.6 790" fill="none" stroke="#55595e" stroke-width="2.6"/>
<path d="M905 727 L910 727 L910 790" fill="none" stroke="#6a6e73" stroke-width="1"/>
<rect x="872" y="702" width="33" height="22" fill="#a3a3a0" opacity="0.85"/>
<rect x="969.5" y="706" width="2.5" height="16" fill="#cfcfcc"/>
<rect x="1104.5" y="708.5" width="3" height="4" fill="#38b6e0"/>
<path d="M996 791.5 L1024 791.5" fill="none" stroke="#e2e2e2" stroke-width="1.6"/>
<text x="1010" y="806" font-family="'Liberation Sans','Noto Sans CJK JP',sans-serif" font-size="6.500" font-weight="700" fill="#e6e6e6" text-anchor="middle" textLength="17" lengthAdjust="spacingAndGlyphs">とまれ</text>
<path d="M996 835 L1024 835" fill="none" stroke="#9a9a9a" stroke-width="1.2"/>
<ellipse cx="1039" cy="800" rx="3" ry="10" fill="#4c4a33" opacity="0.8"/>
<ellipse cx="1040" cy="818" rx="3" ry="7" fill="#4c4a33" opacity="0.8"/>
<ellipse cx="947" cy="800" rx="3" ry="9" fill="#4c4a33" opacity="0.8"/>
<ellipse cx="952" cy="822" rx="4" ry="6" fill="#4c4a33" opacity="0.8"/>
<ellipse cx="1058" cy="790" rx="3" ry="4" fill="#4c4a33" opacity="0.8"/>
<rect x="1055" y="783" width="7" height="9" fill="#4b4d50"/>
<g clip-path="url(#gravc)"><ellipse cx="790" cy="345" rx="110" ry="22" fill="#a6a9aa" opacity="0.7" filter="url(#bl9)"/><ellipse cx="690" cy="520" rx="40" ry="35" fill="#a0a3a4" opacity="0.45" filter="url(#bl9)"/><path d="M600 322 H888 V582 H600 Z" fill="none" stroke="#86735f" stroke-width="34" opacity="0.5" filter="url(#bl9)"/><path d="M640 480 L700 380 L712 322" fill="none" stroke="#86735f" stroke-width="30" opacity="0.45" filter="url(#bl9)"/><rect x="600" y="255" width="540" height="405" filter="url(#nzb)" opacity="0.55"/><ellipse cx="800.6" cy="373.5" rx="24" ry="10" fill="#3d3431" opacity="0.385" filter="url(#bl5)"/><ellipse cx="727.5" cy="395.8" rx="13" ry="16" fill="#3d3431" opacity="0.3575" filter="url(#bl5)"/><ellipse cx="673.5" cy="424" rx="9" ry="12" fill="#3d3431" opacity="0.33" filter="url(#bl5)"/><ellipse cx="689.4" cy="561" rx="15" ry="9" fill="#3d3431" opacity="0.3575" filter="url(#bl5)"/><ellipse cx="835.5" cy="535.5" rx="8" ry="5" fill="#3d3431" opacity="0.3575" filter="url(#bl5)"/><ellipse cx="842" cy="564" rx="7" ry="9" fill="#3d3431" opacity="0.33" filter="url(#bl5)"/><ellipse cx="746.6" cy="507" rx="7" ry="7" fill="#3d3431" opacity="0.22" filter="url(#bl5)"/><ellipse cx="803.8" cy="551" rx="9" ry="7" fill="#3d3431" opacity="0.22" filter="url(#bl5)"/><ellipse cx="760" cy="440" rx="6" ry="8" fill="#3d3431" opacity="0.165" filter="url(#bl5)"/><ellipse cx="700" cy="470" rx="8" ry="14" fill="#3d3431" opacity="0.165" filter="url(#bl5)"/></g>
<g clip-path="url(#grassc)"><rect x="680" y="100" width="680" height="750" filter="url(#nzd)" opacity="0.38"/><rect x="680" y="100" width="680" height="750" filter="url(#nzl)" opacity="0.35"/><ellipse cx="1003" cy="182" rx="14" ry="8" fill="#4a4a32" opacity="0.55" filter="url(#bl3)"/><ellipse cx="1010" cy="232" rx="16" ry="9" fill="#4a4a32" opacity="0.55" filter="url(#bl3)"/><ellipse cx="930" cy="150" rx="6" ry="5" fill="#4a4a32" opacity="0.55" filter="url(#bl3)"/><ellipse cx="1000" cy="150" rx="5" ry="6" fill="#4a4a32" opacity="0.55" filter="url(#bl3)"/><ellipse cx="1098" cy="203" rx="5" ry="4" fill="#4a4a32" opacity="0.55" filter="url(#bl3)"/><ellipse cx="1298" cy="440" rx="4" ry="14" fill="#4a4a32" opacity="0.55" filter="url(#bl3)"/></g>
<rect x="600" y="100" width="760" height="750" filter="url(#nzf)" opacity="0.22"/>
</g><!--/ORTHO-->
  </svg>
  <!-- collapse -->
  <div class="abs" style="left:0;top:0;width:39.500px;height:39.500px;background:#fff;border-right:1px solid #e2e2e2;border-bottom:1px solid #e2e2e2"></div>
  <svg class="abs" style="left:13px;top:12px" width="14" height="16" viewBox="0 0 14 16" fill="none" stroke="#444" stroke-width="1.800"><path d="M9.500 3 L4.500 8 L9.500 13"/></svg>
  <style>
.cb{position:absolute;width:32px;height:32px;border-radius:50%;background:#fff;box-shadow:0 2px 3px rgba(60,50,30,.45),0 0 1px rgba(0,0,0,.2)}
.cb svg{position:absolute;left:0;top:0}
</style>
<!-- toolbar: coords relative to #map (page - 319, page - 95) -->
<div class="cb" style="left:52px;top:17px"><svg width="32" height="32" viewBox="0 0 32 32" fill="none" stroke="#222" stroke-width="1.900" stroke-linecap="round" stroke-linejoin="round"><path d="M12 14.500 L7.500 19 L12 23.500 M7.800 19 H19.500 A4.800 4.800 0 0 0 19.500 9.400 H13.500"/></svg></div>
<div class="cb" style="left:111.500px;top:16.500px;width:33px;height:33px;background:#38a9ee"><svg width="33" height="33" viewBox="0 0 33 33" fill="#fff"><circle cx="16.500" cy="9.600" r="2.600"/><circle cx="16.500" cy="16.500" r="2.600"/><circle cx="16.500" cy="23.400" r="2.600"/></svg></div>
<div class="cb" style="left:156px;top:17px"><svg width="32" height="32" viewBox="0 0 32 32" fill="none" stroke="#222" stroke-width="1.700"><rect x="7" y="10.500" width="18" height="10.500"/><path d="M11.500 10.500 v4.500 M16 10.500 v4.500 M20.500 10.500 v4.500" stroke-width="1.500"/></svg></div>
<div class="cb" style="left:200px;top:17px"><svg width="32" height="32" viewBox="0 0 32 32" fill="none" stroke="#222" stroke-width="1.700" stroke-linejoin="round"><path d="M16 7.300 L25 14 L21.600 24.300 H10.400 L7 14 Z"/></svg></div>
<div class="cb" style="left:244px;top:17px"><svg width="32" height="32" viewBox="0 0 32 32" fill="none" stroke="#222" stroke-width="1.500" stroke-linejoin="round"><path d="M16 6.500 L7.500 21.500 L11.500 25 H20.500 L24.500 21.500 Z M16 6.500 L13.500 25 M16 6.500 L18.500 25"/></svg></div>
<div class="cb" style="left:288px;top:17px"><svg width="32" height="32" viewBox="0 0 32 32" fill="none" stroke="#222" stroke-width="1.500" stroke-linejoin="round"><path d="M5.500 20 L10.500 11.500 L13.500 14.500 L18 7.500 L22 13.500 H25"/><rect x="13.500" y="19" width="12" height="5.800"/><path d="M16.500 19 v2.500 M19.500 19 v2.500 M22.500 19 v2.500" stroke-width="1.200"/></svg></div>
<div class="cb" style="left:332px;top:17px"><svg width="32" height="32" viewBox="0 0 32 32" fill="none" stroke="#222" stroke-width="1.700"><rect x="7.500" y="8.500" width="7" height="5"/><path d="M14.500 8.500 H25 V13.500 M19.500 8.500 V13.500 M7.500 13.500 V24 H14.500 M7.500 18.800 H14.500"/><rect x="17.500" y="16.500" width="7.500" height="7.500" fill="#222"/></svg></div>
<div class="cb" style="left:376px;top:17px"><svg width="32" height="32" viewBox="0 0 32 32" fill="none" stroke="#222" stroke-width="1.800" stroke-linejoin="round"><path d="M14 12 H8.500 V23.500 H20 V20"/><path d="M13.500 20.500 L14.500 16.500 L23 8 L26 11 L17.500 19.500 Z" /></svg></div>
<div class="cb" style="left:419.500px;top:16.500px;width:33px;height:33px;background:#e6e2d8;box-shadow:0 2px 3px rgba(60,50,30,.35)"><svg width="33" height="33" viewBox="0 0 33 33"><path d="M7 23 L13.200 9.800 Q16 5 19.800 8.500 L22.500 23 Z" fill="#8e8b86"/><g transform="rotate(-38 22.300 20.300)"><rect x="16.300" y="17.300" width="12" height="6" fill="#e6e2d8" stroke="#8e8b86" stroke-width="1.400"/><path d="M19.300 17.300v2.600M22.300 17.300v2.600M25.300 17.300v2.600" stroke="#8e8b86" stroke-width="1"/></g></svg></div>
<!-- date filter -->
<div class="abs" style="left:891px;top:16.500px;width:290px;height:39px;background:#fff;border:1px solid #d2d2d2;border-radius:4px"></div>
<svg class="abs" style="left:903px;top:26px" width="20" height="20" viewBox="0 0 20 20"><path d="M2 4.500 H18 V18 H2 Z" fill="#2b2b2b"/><rect x="3.500" y="8" width="13" height="8.500" fill="#fff"/><g fill="#2b2b2b"><rect x="4.200" y="1.500" width="2.600" height="4"/><rect x="8.700" y="1.500" width="2.600" height="4"/><rect x="13.200" y="1.500" width="2.600" height="4"/><rect x="5" y="9.500" width="2.300" height="2.300"/><rect x="8.850" y="9.500" width="2.300" height="2.300"/><rect x="12.700" y="9.500" width="2.300" height="2.300"/><rect x="5" y="13" width="2.300" height="2.300"/><rect x="8.850" y="13" width="2.300" height="2.300"/><rect x="12.700" y="13" width="2.300" height="2.300"/></g></svg>
<div class="abs" style="left:930px;top:24px;height:24px;line-height:24px;font-size:16px;color:#a4a4a4;white-space:nowrap">表示期間を限定...</div>
<!-- map style button -->
<div class="abs" style="left:1207px;top:16px;width:40px;height:40px;background:#fff;border-radius:3px;box-shadow:0 1px 3px rgba(0,0,0,.3)"><svg class="abs" style="left:9px;top:9px" width="22" height="22" viewBox="0 0 22 22"><path d="M1.800 4 L7.300 2 V18 L1.800 20 Z M14.700 4 L20.200 2 V18 L14.700 20 Z" fill="#777"/><path d="M7.300 2 L14.700 4 V20 L7.300 18 Z" fill="#fff" stroke="#777" stroke-width="1.300" stroke-linejoin="round"/></svg></div>
<div class="cb" style="left:1210.500px;top:70px;width:33px;height:33px"><svg width="33" height="33" viewBox="0 0 33 33" fill="#262626"><circle cx="16.500" cy="9.700" r="2.550"/><circle cx="16.500" cy="16.500" r="2.550"/><circle cx="16.500" cy="23.300" r="2.550"/></svg></div>
<!-- left buttons -->
<div class="cb" style="left:10px;top:516px"><svg width="32" height="32" viewBox="0 0 32 32" fill="none" stroke="#222" stroke-width="1.600"><path d="M7 11 V7 H11 M21 7 H25 V11 M25 21 V25 H21 M11 25 H7 V21"/><path d="M13.500 10.500 V19 H22 M11 13 L13.500 10.300 L16 13 M19.500 16.500 L22.200 19 L19.500 21.500" stroke-width="1.800"/></svg></div>
<div class="cb" style="left:10px;top:566px"><svg width="32" height="32" viewBox="0 0 32 32" fill="none" stroke="#222" stroke-width="1.600"><path d="M7 11 V7 H11 M21 7 H25 V11 M25 21 V25 H21 M11 25 H7 V21"/><path d="M11 10.500 L14.500 11.500 V20.500 L11 21.500 Z M21 10.500 L17.500 11.500 V20.500 L21 21.500 Z" fill="#222" stroke-width="1"/><path d="M14.500 11.500 H17.500 M14.500 20.500 H17.500" stroke-width="1.200"/></svg></div>
<div class="abs" style="left:8px;top:615px;width:35px;height:35px;border-radius:5px;background:#d1d1d1"><svg class="abs" style="left:6px;top:5.500px;transform:rotate(-14deg)" width="22" height="24" viewBox="0 0 22 24" fill="#fff" stroke="#111" stroke-width="1.500" stroke-linejoin="round"><path d="M7 13 V6.500 Q7 5 8.300 5 Q9.500 5 9.500 6.500 V5.500 Q9.500 4 10.800 4 Q12 4 12 5.500 V6.300 Q12 5 13.300 5 Q14.500 5 14.500 6.500 V8 Q14.500 7 15.700 7 Q17 7 17 8.500 V15 Q17 20 14.500 21.500 H8.500 Q6 19 3.500 14 Q2.800 12.300 4.300 12 Q5.500 12 7 14.500 Z"/><path d="M9.500 6.500 V11.500 M12 6.300 V11.500 M14.500 8 V11.500" fill="none" stroke-width="1.100"/></svg></div>
<!-- zoom -->
<div class="abs" style="left:8.500px;top:685.500px;width:31.500px;height:90px;border-radius:6px;background:#e3dcc6"></div>
<div class="abs" style="left:10.500px;top:687.500px;width:27.500px;height:86px;border-radius:4px;background:#fff"></div>
<div class="abs" style="left:10.500px;top:716px;width:27.500px;height:1px;background:#dcdcdc"></div>
<div class="abs" style="left:10.500px;top:745px;width:27.500px;height:1px;background:#dcdcdc"></div>
<svg class="abs" style="left:10.500px;top:687.500px" width="28" height="86" viewBox="0 0 28 86"><path d="M8.500 14 H19.500 M14 8.500 V19.500 M8.500 43.500 H19.500" stroke="#262626" stroke-width="2.600" fill="none"/><path d="M13.500 67.500 V76.500 L6.500 72 Z" fill="#222"/><path d="M15.500 67.500 V76.500 L22.500 72 Z" fill="#c4c4c4"/></svg>
<!-- scale -->
<div class="abs" style="left:10px;top:784px;width:45px;height:21.500px;border:2px solid #2e2e2e;border-top:none;background:rgba(255,255,255,.78);font-size:10px;color:#333;line-height:21px;padding-left:6px">10 m</div>
<!-- layer buttons -->
<div class="abs" style="left:583.500px;top:747px;width:94px;height:44px;border-radius:10px;background:rgba(255,255,255,.62)"></div>
<div class="cb" style="left:592px;top:752px"><svg width="32" height="32" viewBox="0 0 32 32" fill="none" stroke="#222" stroke-width="1.500"><path d="M8 19.500 V8.500 H21.500"/><path d="M10.500 22 V11 H24"/><rect x="13" y="13.500" width="13" height="11.500" fill="#fff"/><path d="M14 24 L18 18.500 L20.500 21.500 L22.500 19.500 L25.500 24 Z" fill="#222" stroke="none"/></svg></div>
<div class="cb" style="left:638px;top:752px"><svg width="32" height="32" viewBox="0 0 32 32" fill="none" stroke="#222" stroke-width="1.500" stroke-linejoin="round"><path d="M16 7 L24.500 11.500 L16 16 L7.500 11.500 Z"/><path d="M9.500 15 L7.500 16 L16 20.500 L24.500 16 L22.500 15"/><path d="M9.500 19.500 L7.500 20.500 L16 25 L24.500 20.500 L22.500 19.500"/></svg></div>
<!-- attribution -->
<div class="abs" style="left:917px;top:797px;width:342px;height:20px;background:rgba(255,255,255,.5);font-size:12px;line-height:18px;color:#555;white-space:nowrap;text-align:right;padding-right:4px;letter-spacing:.09px"><span style="color:#111">© SkymatiX |</span> © OpenMapTiles © OpenStreetMap contributors</div>
<!-- info panel -->
<div class="abs" style="left:1037.500px;top:676px;width:214px;height:110px;background:#fff;border-radius:4px;box-shadow:0 1px 4px rgba(0,0,0,.35)"></div>
<div class="abs" style="left:1046.500px;top:683px;height:20px;line-height:20px;font-size:12px;color:#222;white-space:nowrap">地理座標系</div>
<svg class="abs" style="left:1225.500px;top:694px" width="11" height="6" viewBox="0 0 11 6"><path d="M0 0 H11 L5.500 5.500 Z" fill="#7a7a7a"/></svg>
<div class="abs" style="left:1046px;top:708px;width:197px;height:1px;background:#666"></div>
<div class="abs" style="left:1100px;top:716px;width:142.500px;height:20px;line-height:20px;font-size:13.300px;color:#222;text-align:right;white-space:nowrap">37.6298525° N</div>
<div class="abs" style="left:1100px;top:733.500px;width:142.500px;height:20px;line-height:20px;font-size:13.300px;color:#222;text-align:right;white-space:nowrap">141.0122334° E</div>
<div class="abs" style="left:1100px;top:756px;width:142.500px;height:20px;line-height:20px;font-size:13.300px;color:#222;text-align:right;white-space:nowrap">- m</div>
<!-- popup 1 -->
<div class="abs" style="left:1070px;top:688px;width:87px;height:112px;background:#fff;border-radius:5px;box-shadow:0 2px 6px rgba(0,0,0,.3);overflow:hidden">
  <div class="abs" style="left:16px;top:8px;height:30px;line-height:30px;font-size:12px;color:#222;white-space:nowrap">標高</div>
  <div class="abs" style="left:0;top:38px;width:87px;height:36px;background:#e8eef8"></div>
  <div class="abs" style="left:16px;top:40px;height:30px;line-height:30px;font-size:12px;color:#222;white-space:nowrap">高さ</div>
  <div class="abs" style="left:22.500px;top:70px;height:30px;line-height:30px;font-size:12px;color:#2a62c9;white-space:nowrap">追加</div>
</div>
<!-- popup 2 -->
<div class="abs" style="left:1095px;top:718px;width:61px;height:82px;background:#fff;border-radius:5px;box-shadow:0 2px 6px rgba(0,0,0,.35);overflow:hidden">
  <div class="abs" style="left:0;top:8px;width:61px;height:32.500px;background:#f4f4f4"></div>
  <div class="abs" style="left:16.500px;top:8px;height:32px;line-height:31px;font-size:14px;color:#222;white-space:nowrap">編集</div>
  <div class="abs" style="left:16.500px;top:41px;height:32px;line-height:31px;font-size:14px;color:#222;white-space:nowrap">削除</div>
</div>
<svg class="abs" style="left:1080px;top:745px" width="92" height="60" viewBox="0 0 92 60"><ellipse cx="45.800" cy="29.200" rx="37.700" ry="23.600" fill="none" stroke="#f0391f" stroke-width="3"/></svg>


</div>
<div class="abs" style="left:0;top:911px;width:1578px;height:2px;background:linear-gradient(90deg,#13282c 0,#13282c 30px,#a9a9a9 30px,#a9a9a9 296px,#3b1d12 296px,#3b1d12 663px,#8d9aa6 663px,#8d9aa6 842px,#13262a 842px,#13262a 918px,#c9c9c9 918px)"></div>
<svg class="abs" style="left:0;top:899px" width="12" height="12" viewBox="0 0 12 12"><path d="M0 0 V12 H12 A12 12 0 0 1 0 0 Z" fill="#13282c"/></svg>
<svg class="abs" style="left:1566px;top:899px" width="12" height="12" viewBox="0 0 12 12"><path d="M12 0 V12 H0 A12 12 0 0 0 12 0 Z" fill="#c9c9c9"/></svg>

</body>
</html>
